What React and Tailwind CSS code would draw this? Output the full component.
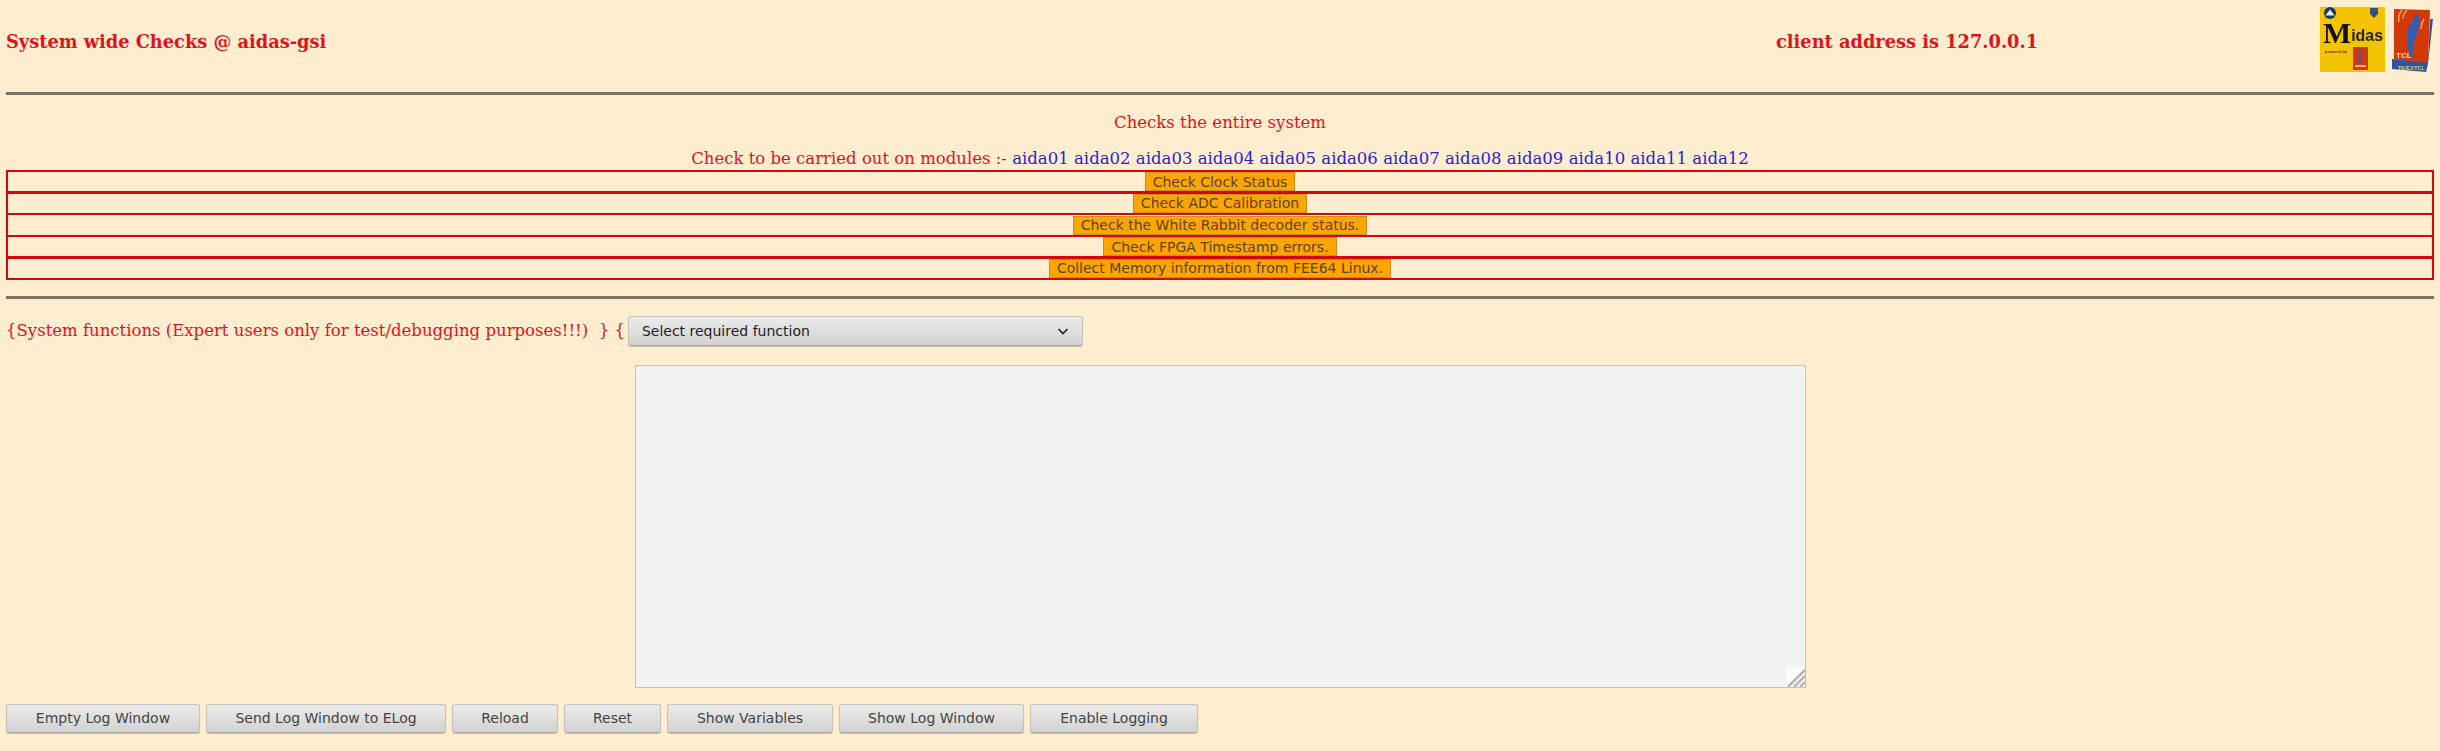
import React from "react";

const modules = ["aida01", "aida02", "aida03", "aida04", "aida05", "aida06", "aida07", "aida08", "aida09", "aida10", "aida11", "aida12"];

const checks = [
  "Check Clock Status",
  "Check ADC Calibration",
  "Check the White Rabbit decoder status.",
  "Check FPGA Timestamp errors.",
  "Collect Memory information from FEE64 Linux.",
];

const footerButtons = [
  { label: "Empty Log Window", width: "w-[194px]" },
  { label: "Send Log Window to ELog", width: "w-[240px]" },
  { label: "Reload", width: "w-[106px]" },
  { label: "Reset", width: "w-[97px]" },
  { label: "Show Variables", width: "w-[166px]" },
  { label: "Show Log Window", width: "w-[185px]" },
  { label: "Enable Logging", width: "w-[168px]" },
];

const MidasLogo = () => (
  <svg width="65" height="65" viewBox="0 0 65 65" className="block blur-[0.4px]">
    <rect width="65" height="65" fill="#f5c400" />
    <circle cx="10" cy="6" r="6" fill="#173a66" />
    <path d="M5.5 8.5 L10 2.5 L14.5 8.5 Z" fill="#e8eef0" />
    <path d="M50 1 H58 V7 L54 11 L50 7 Z" fill="#34507e" />
    <text x="3" y="36" textLength="60" lengthAdjust="spacingAndGlyphs" fill="#14110a">
      <tspan fontFamily="'Liberation Serif', serif" fontWeight="700" fontSize="30">M</tspan>
      <tspan dy="-2" fontFamily="'Liberation Sans', sans-serif" fontWeight="700" fontSize="16" fill="#2a2208">idas</tspan>
    </text>
    <text x="5" y="46" fontFamily="'Liberation Sans', sans-serif" fontWeight="700" fontSize="4" fill="#4a3c08">powered by</text>
    <rect x="33" y="40" width="15" height="23" fill="#cf3a10" />
    <path d="M42 43 C39 47 39 52 41 57" stroke="#3a5aa8" strokeWidth="2" fill="none" />
    <rect x="35" y="58" width="11" height="2" fill="#f0b090" />
  </svg>
);

const TclLogo = () => (
  <svg width="42" height="66" viewBox="0 0 42 66" className="block blur-[0.4px]">
    <path d="M0 52 L0 62 L34 65 L36 57 L41 12 L38 12 L36 54 Z" fill="#2f55a0" />
    <path d="M2 2 L38 3 L36 56 L2 52 Z" fill="#d13a08" />
    <path d="M26 6 C19 13 15 23 15 33 C15 41 17 47 21 53 C20 44 21 36 24 29 C27 22 28 12 26 6 Z" fill="#2d5fb8" />
    <path d="M10 3 C7 7 6 11 7 15 M15 3 C12 6 11 9 11 12 M32 12 C30 15 29 18 29 22" stroke="#f2a85a" strokeWidth="1.5" fill="none" />
    <text x="4" y="51" fontFamily="'Liberation Sans', sans-serif" fontWeight="700" fontSize="8" fill="#f4e6c8">TCL</text>
    <text x="6" y="63" fontFamily="'Liberation Sans', sans-serif" fontWeight="700" fontSize="5.5" fill="#d8d040">TK/EXTCL</text>
  </svg>
);

const GreyButton = ({ label, width }) => (
  <button className={`${width} h-[29px] rounded-[3px] border border-[#c4c2bc] border-b-[#a9a7a2] bg-gradient-to-b from-[#ebebeb] to-[#d2d2d2] text-center font-['DejaVu_Sans',sans-serif] text-[14px] text-[#444] shadow-[0_1px_1px_rgba(0,0,0,0.2)]`}>
    {label}
  </button>
);

const App = () => {
  return (
    <div className="min-h-[751px] bg-[#ffedcf] px-1.5 font-['DejaVu_Serif',serif] text-[16.53px] text-[#e2121c]">
      <div className="flex h-[81px] items-center text-[17.8px]">
        <div className="w-[1770px] pt-[3px] font-bold">System wide Checks @ aidas-gsi</div>
        <div className="flex-1 pt-[3px] font-bold">client address is 127.0.0.1</div>
        <div className="flex gap-[7px] pb-[2px]">
          <MidasLogo />
          <TclLogo />
        </div>
      </div>

      <hr className="mt-[11px] border-0 border-t-[3px] border-[#7d7468]" />

      <div className="mt-[16px] text-center">Checks the entire system</div>

      <div className="mt-[13px] text-center leading-[19px]">
        Check to be carried out on modules :-{" "}
        {modules.map((m) => (
          <a key={m} className="text-[#2a1fd6]">
            {m}{" "}
          </a>
        ))}
      </div>

      <div className="mt-[2px] flex flex-col">
        {checks.map((c, i) => (
          <div
            key={c}
            className={`flex h-[24px] items-center justify-center border-2 border-[#d4070f] ${i > 0 ? "-mt-[2.4px]" : ""}`}
          >
            <button className="h-[19px] border border-[#c98f1c] bg-[#ffa500] px-[7px] font-['DejaVu_Sans',sans-serif] text-[14px] leading-none text-[#5c4310]">
              {c}
            </button>
          </div>
        ))}
      </div>

      <hr className="mt-[16px] border-0 border-t-[3px] border-[#7d7468]" />

      <div className="mt-[17px] flex items-center">
        <span className="whitespace-pre">{"{System functions (Expert users only for test/debugging purposes!!!)  } {"}</span>
        <div className="ml-[3px] flex h-[30px] w-[455px] items-center justify-between rounded-[3px] border border-[#c4c2bc] border-b-[#a9a7a2] bg-gradient-to-b from-[#ebebeb] to-[#d2d2d2] pl-[13px] pr-[12px] font-['DejaVu_Sans',sans-serif] text-[14px] text-[#222] shadow-[0_1px_1px_rgba(0,0,0,0.2)]">
          Select required function
          <svg width="14" height="14" viewBox="0 0 14 14" fill="none" stroke="#222" strokeWidth="1.6">
            <path d="M2.5 5 L7 9.5 L11.5 5" />
          </svg>
        </div>
      </div>

      <div className="mt-[19px] flex justify-center">
        <div className="relative">
          <textarea
            readOnly
            className="block h-[323px] w-[1171px] resize-none border border-[#c2c2bf] bg-[#f2f2f0] outline-none"
          />
          {/* resize grip */}
          <svg width="19" height="20" viewBox="0 0 19 20" className="absolute bottom-px right-px">
            <rect width="19" height="20" fill="#fbfbfa" />
            <path d="M2 20 L19 3 M8 20 L19 9 M14 20 L19 15" stroke="#b5b5b2" strokeWidth="2.5" />
          </svg>
        </div>
      </div>

      <div className="mt-[16px] flex gap-[6px]">
        {footerButtons.map((b) => (
          <GreyButton key={b.label} {...b} />
        ))}
      </div>
    </div>
  );
};

export default App;
